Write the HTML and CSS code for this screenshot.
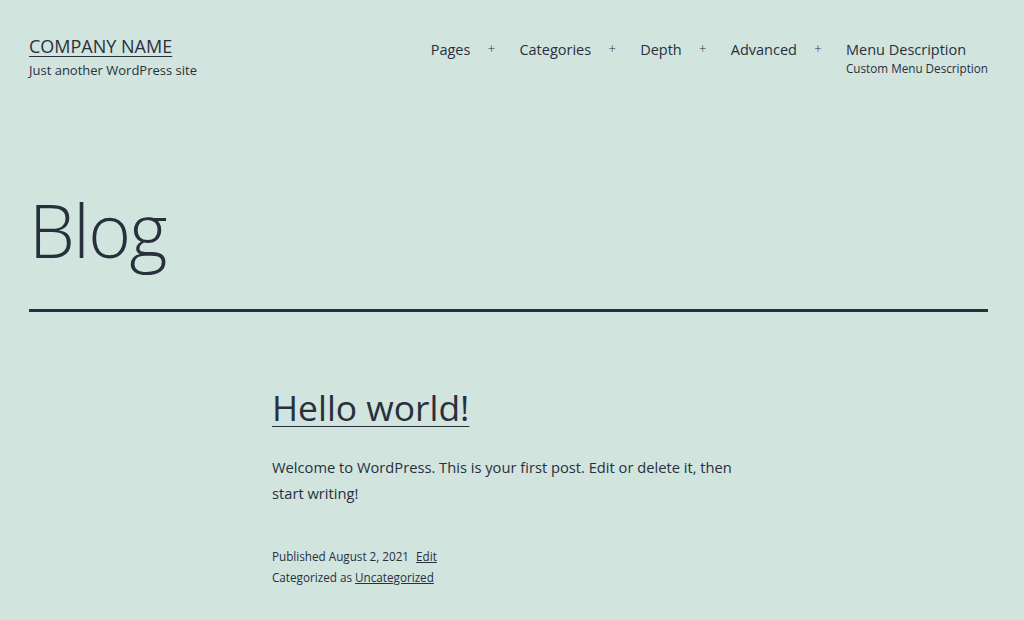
FILE: index.html
```html
<!DOCTYPE html>
<html lang="en">
<head>
    <meta charset="UTF-8">
    <meta name="viewport" content="width=device-width, initial-scale=1.0">
    <title>Blog – COMPANY NAME</title>
    <link rel="stylesheet" href="styles.css">
</head>
<body>
    <div class="site">
        <header class="site-header">
            <div class="site-branding">
                <p class="site-title"><a href="#">COMPANY NAME</a></p>
                <p class="site-description">Just another WordPress site</p>
            </div>

            <nav class="primary-navigation">
                <ul class="primary-menu">
                    <li class="menu-item"><a href="#">Pages</a><span class="sub-menu-toggle">+</span></li>
                    <li class="menu-item"><a href="#">Categories</a><span class="sub-menu-toggle">+</span></li>
                    <li class="menu-item"><a href="#">Depth</a><span class="sub-menu-toggle">+</span></li>
                    <li class="menu-item"><a href="#">Advanced</a><span class="sub-menu-toggle">+</span></li>
                    <li class="menu-item">
                        <a href="#">Menu Description
                            <span class="menu-item-description">Custom Menu Description</span>
                        </a>
                    </li>
                </ul>
            </nav>
        </header>

        <main class="site-main">
            <header class="page-header">
                <h1 class="page-title">Blog</h1>
            </header>

            <article class="post">
                <h2 class="entry-title"><a href="#">Hello world!</a></h2>
                <div class="entry-content">
                    <p>Welcome to WordPress. This is your first post. Edit or delete it, then start writing!</p>
                </div>
                <footer class="entry-footer">
                    <div class="posted-by">Published August 2, 2021 <a class="edit-link" href="#">Edit</a></div>
                    <div class="cat-links">Categorized as <a href="#">Uncategorized</a></div>
                </footer>
            </article>
        </main>
    </div>
</body>
</html>
```

FILE: styles.css
```css
body {
    margin: 0;
    background-color: #d1e4dd;
    color: #28303d;
    font-family: "Open Sans", "Noto Sans", sans-serif;
}

a {
    color: #28303d;
}

p {
    margin: 0;
}

.site {
    padding: 0 36px 0 29px;
}

/* header */

.site-header {
    display: flex;
    justify-content: space-between;
    align-items: flex-start;
    padding-top: 33px;
}

.site-title {
    font-size: 18px;
    line-height: 26px;
}

.site-title a {
    text-decoration-thickness: 1px;
    text-underline-offset: 3px;
}

.site-description {
    margin-top: 1px;
    font-size: 13px;
    line-height: 20px;
}

.primary-menu {
    display: flex;
    list-style: none;
    margin: 0;
    padding: 6px 0 0;
}

.menu-item {
    display: flex;
    align-items: flex-start;
    font-size: 14.5px;
    line-height: 21px;
}

.menu-item a {
    text-decoration: none;
}

.sub-menu-toggle {
    width: 42px;
    margin-right: 7px;
    text-align: center;
    font-size: 13px;
    line-height: 19px;
    font-weight: 300;
}

.menu-item-description {
    display: block;
    font-size: 11.7px;
    line-height: 16px;
}

/* page title */

.page-header {
    margin-top: 106px;
    border-bottom: 3px solid #28303d;
    padding-bottom: 35px;
}

.page-title {
    margin: 0;
    font-size: 73px;
    font-weight: 300;
    line-height: 88px;
    letter-spacing: -1.5px;
}

/* post */

.post {
    width: 480px;
    margin: 71px 0 0 243px;
}

.entry-title {
    margin: 0;
    font-size: 35.4px;
    font-weight: 400;
    line-height: 48px;
}

.entry-title a {
    text-decoration-thickness: 1px;
    text-underline-offset: 5px;
}

.entry-content {
    margin-top: 23px;
    font-size: 14.7px;
    line-height: 26px;
}

.entry-footer {
    margin-top: 40px;
    font-size: 11.7px;
    line-height: 21px;
}

.edit-link {
    margin-left: 4px;
}
```
